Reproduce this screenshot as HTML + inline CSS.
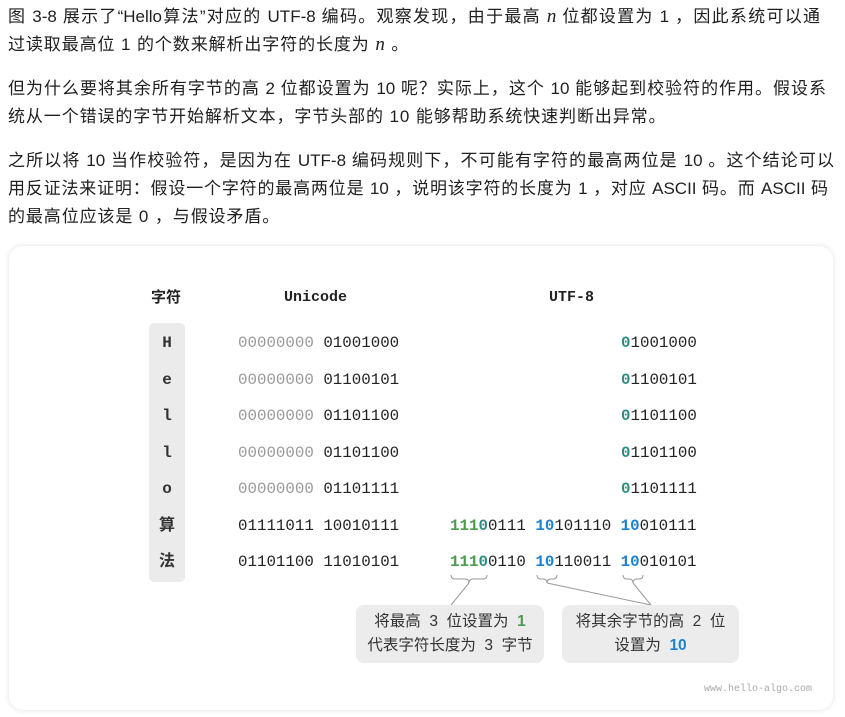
<!DOCTYPE html>
<html><head><meta charset="utf-8"><style>
body{margin:0;background:#fff;width:845px;height:717px;overflow:hidden;font-family:"Liberation Sans","Noto Sans CJK SC",sans-serif;color:#1f1f1f}
p{margin:0;position:absolute;left:8px;font-size:17px;line-height:28px;white-space:nowrap}
.j{display:block;text-align:justify;text-align-last:justify;text-justify:inter-character}
i{font-family:"Liberation Serif",serif;font-size:19px}
.card{position:absolute;left:9px;top:246px;width:824px;height:464px;border-radius:14px;background:#fff;box-shadow:0 0 6px rgba(0,0,0,0.12)}
.m{position:absolute;font-family:"Liberation Mono","Noto Sans CJK SC",monospace;font-size:15.8px;color:#222;white-space:pre;line-height:20px}
.h{font-weight:bold;font-size:15px}
.g{color:#999}.gr{color:#4a9b4c;font-weight:bold}.t{color:#2e8b7f;font-weight:bold}.b{color:#1b82d1;font-weight:bold}
.col{position:absolute;left:149px;top:323px;width:36px;height:259px;background:#ebebeb;border-radius:5px}
.c{position:absolute;width:36px;left:149px;text-align:center;font-family:"Liberation Mono","Noto Sans CJK SC",monospace;font-weight:bold;font-size:16px;color:#333;line-height:20px}
.box{position:absolute;background:#ececec;border-radius:8px;font-size:15.5px;color:#333;text-align:center;line-height:24px;padding-top:5px;box-sizing:border-box;white-space:pre}
</style></head><body>
<p style="top:3px"><span class="j" style="width:812px">图 3-8 展示了“Hello算法”对应的 UTF-8 编码。观察发现，由于最高 <i>n</i> 位都设置为 1 ，因此系统可以通</span><span style="letter-spacing:0.9px">过读取最高位 1 的个数来解析出字符的长度为 <i>n</i> 。</span></p>
<p style="top:75px"><span class="j" style="width:818px">但为什么要将其余所有字节的高 2 位都设置为 10 呢？实际上，这个 10 能够起到校验符的作用。假设系</span><span style="letter-spacing:0.9px">统从一个错误的字节开始解析文本，字节头部的 10 能够帮助系统快速判断出异常。</span></p>
<p style="top:147px"><span class="j" style="width:826px">之所以将 10 当作校验符，是因为在 UTF-8 编码规则下，不可能有字符的最高两位是 10 。这个结论可以</span><span class="j" style="width:820px">用反证法来证明：假设一个字符的最高两位是 10 ，说明该字符的长度为 1 ，对应 ASCII 码。而 ASCII 码</span><span style="letter-spacing:0.9px">的最高位应该是 0 ，与假设矛盾。</span></p>
<div class="card"></div>
<div class="m h" style="left:151px;top:288px;font-family:'Liberation Sans','Noto Sans CJK SC',sans-serif">字符</div>
<div class="m h" style="left:284px;top:288px">Unicode</div>
<div class="m h" style="left:549px;top:288px">UTF-8</div>
<div class="col"></div>
<div class="c" style="top:333px">H</div>
<div class="c" style="top:370px">e</div>
<div class="c" style="top:406px">l</div>
<div class="c" style="top:443px">l</div>
<div class="c" style="top:479px">o</div>
<div class="c" style="top:516px">算</div>
<div class="c" style="top:552px">法</div>
<div class="m" style="left:238px;top:333px"><span class="g">00000000</span> 01001000</div>
<div class="m" style="left:238px;top:370px"><span class="g">00000000</span> 01100101</div>
<div class="m" style="left:238px;top:406px"><span class="g">00000000</span> 01101100</div>
<div class="m" style="left:238px;top:443px"><span class="g">00000000</span> 01101100</div>
<div class="m" style="left:238px;top:479px"><span class="g">00000000</span> 01101111</div>
<div class="m" style="left:238px;top:516px">01111011 10010111</div>
<div class="m" style="left:238px;top:552px">01101100 11010101</div>
<div class="m" style="left:621px;top:333px"><span class="t">0</span>1001000</div>
<div class="m" style="left:621px;top:370px"><span class="t">0</span>1100101</div>
<div class="m" style="left:621px;top:406px"><span class="t">0</span>1101100</div>
<div class="m" style="left:621px;top:443px"><span class="t">0</span>1101100</div>
<div class="m" style="left:621px;top:479px"><span class="t">0</span>1101111</div>
<div class="m" style="left:450px;top:516px"><span class="gr">111</span><span class="t">0</span>0111 <span class="b">10</span>101110 <span class="b">10</span>010111</div>
<div class="m" style="left:450px;top:552px"><span class="gr">111</span><span class="t">0</span>0110 <span class="b">10</span>110011 <span class="b">10</span>010101</div>
<svg style="position:absolute;left:0;top:0" width="845" height="717">
<g fill="none" stroke="#999" stroke-width="1">
<path d="M451 575q0 4 4 4h10q4 0 4 4q0-4 4-4h10q4 0 4-4"/>
<path d="M537 575q0 4 4 4h2q4 0 4 4q0-4 4-4h2q4 0 4-4"/>
<path d="M623 575q0 4 4 4h2q4 0 4 4q0-4 4-4h2q4 0 4-4"/>
<path d="M469 583L451 605M547 583L651 605M633 583L651 605"/>
</g></svg>
<div class="box" style="left:356px;top:605px;width:188px;height:58px">将最高  3  位设置为  <b style="color:#4a9b4c">1</b>
代表字符长度为  3  字节</div>
<div class="box" style="left:562px;top:605px;width:177px;height:58px">将其余字节的高  2  位
设置为  <b style="color:#1b82d1">10</b></div>
<div class="m" style="left:704px;top:680px;font-size:10px;color:#aaa">www.hello-algo.com</div>
</body></html>
